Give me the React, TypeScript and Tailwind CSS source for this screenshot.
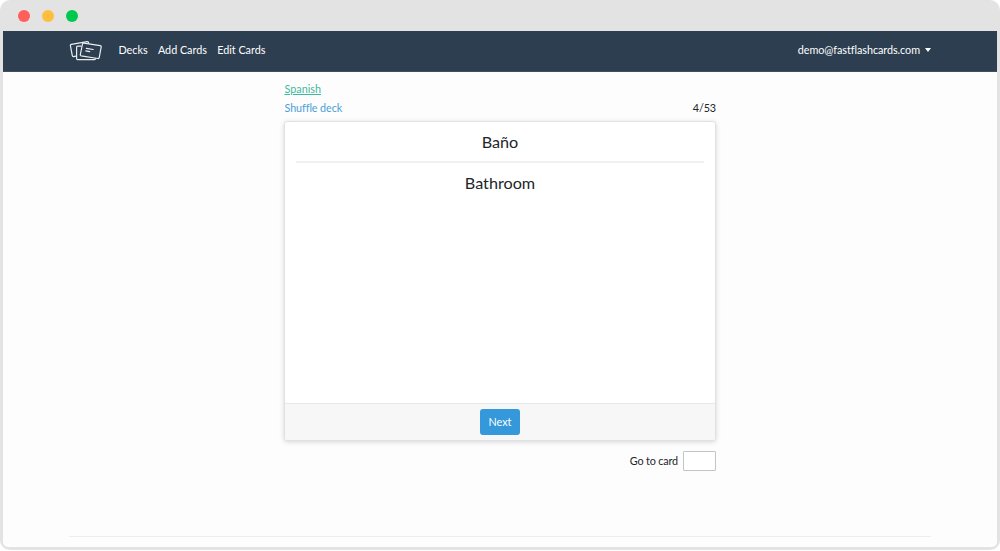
import React from "react";

function Logo() {
  return (
    <svg
      className="h-[22px] w-[34px] shrink-0"
      viewBox="0 0 34 22"
      fill="none"
      stroke="#e9edf0"
      strokeWidth="1.2"
      strokeLinecap="round"
      strokeLinejoin="round"
    >
      <path d="M7 16.2 4.6 16.6Q3.5 16.8 3.3 15.7L1.4 5.7Q1.2 4.6 2.3 4.4L18.2 1.6Q19.2 1.5 19.5 2.5L19.7 3.2" />
      <path d="M12 6.2H8.6Q7.6 6.2 7.6 7.2V18.6Q7.6 19.7 8.6 19.7H25.4Q26.3 19.7 26.4 18.7" />
      <path d="M14.9 3.1 31.2 5.6Q32.4 5.8 32.2 6.9L30.2 17.7Q30 18.7 28.9 18.5L12.2 15.9Q11.1 15.7 11.3 14.6L13.5 4Q13.7 2.9 14.9 3.1Z" />
      <path d="M17.4 8.3 24.2 9.5M16.8 10.9 20.7 11.7" />
    </svg>
  );
}

function Navbar() {
  return (
    <nav className="flex h-[41px] shrink-0 items-center justify-between border-b border-[#3f4e60] bg-[#2c3e50] px-[66px] text-white">
      <div className="flex items-center">
        <Logo />
        <div className="mb-[2px] ml-[15.5px] flex gap-[10.4px] tracking-[-0.02px]">
          <a>Decks</a>
          <a>Add Cards</a>
          <a>Edit Cards</a>
        </div>
      </div>
      <a className="mb-[2px] flex items-center gap-[5px] tracking-[-0.05px]">
        demo@fastflashcards.com
        <span className="mb-px border-x-[3.5px] border-t-4 border-x-transparent border-t-white" />
      </a>
    </nav>
  );
}

function Flashcard() {
  return (
    <section className="mt-[5px] flex h-[320px] flex-col overflow-hidden rounded-[3px] border border-[#dfe2e2] bg-white shadow-[0_1px_5px_rgba(0,0,0,0.16)]">
      <div className="flex-1 px-[11px] text-center text-[16.2px] leading-[20px] text-[#212529]">
        <div className="flex h-[41px] items-center justify-center border-b-2 border-[#f0f0f0] pt-px">Baño</div>
        <div className="flex h-[41px] items-center justify-center pb-px">Bathroom</div>
      </div>
      <footer className="flex h-[37px] items-center justify-center border-t border-[#e8e8e8] bg-[#f7f7f7]">
        <button className="h-[26px] w-10 rounded-[3px] bg-[#3498db] text-white">Next</button>
      </footer>
    </section>
  );
}

export default function App() {
  return (
    <div className="h-[551px] bg-white font-['Lato',sans-serif] text-[10.8px] leading-4 text-[#212529]">
      <div className="flex h-[550px] flex-col rounded-[10px] bg-[#e3e3e3] px-[3px] pb-[3px]">
        <div className="flex h-[31px] shrink-0 items-center gap-3 pl-[15px]">
          <span className="size-3 rounded-full bg-[#ff5f5a]" />
          <span className="size-3 rounded-full bg-[#ffbe40]" />
          <span className="size-3 rounded-full bg-[#00ca4e]" />
        </div>
        <div className="flex flex-1 flex-col overflow-hidden rounded-b-[5px] bg-[#fdfdfd]">
          <Navbar />
          <main className="mx-auto w-[432px] pt-[9px]">
            <a className="ml-[0.5px] block text-[#3dba9e] underline">Spanish</a>
            <div className="mt-[3px] flex justify-between pl-[0.5px]">
              <a className="tracking-[-0.1px] text-[#4a9fd8]">Shuffle deck</a>
              <span className="tracking-[-0.1px]">4/53</span>
            </div>
            <Flashcard />
            <div className="mt-[10px] flex items-center justify-end gap-[5px]">
              <label htmlFor="card-number" className="tracking-[-0.16px]">Go to card</label>
              <input
                id="card-number"
                className="h-5 w-[33px] rounded-[1px] border border-[#c4c4c4] bg-white"
              />
            </div>
          </main>
          <hr className="mx-[66px] mt-auto mb-[10px] border-[#ededed]" />
        </div>
      </div>
    </div>
  );
}
